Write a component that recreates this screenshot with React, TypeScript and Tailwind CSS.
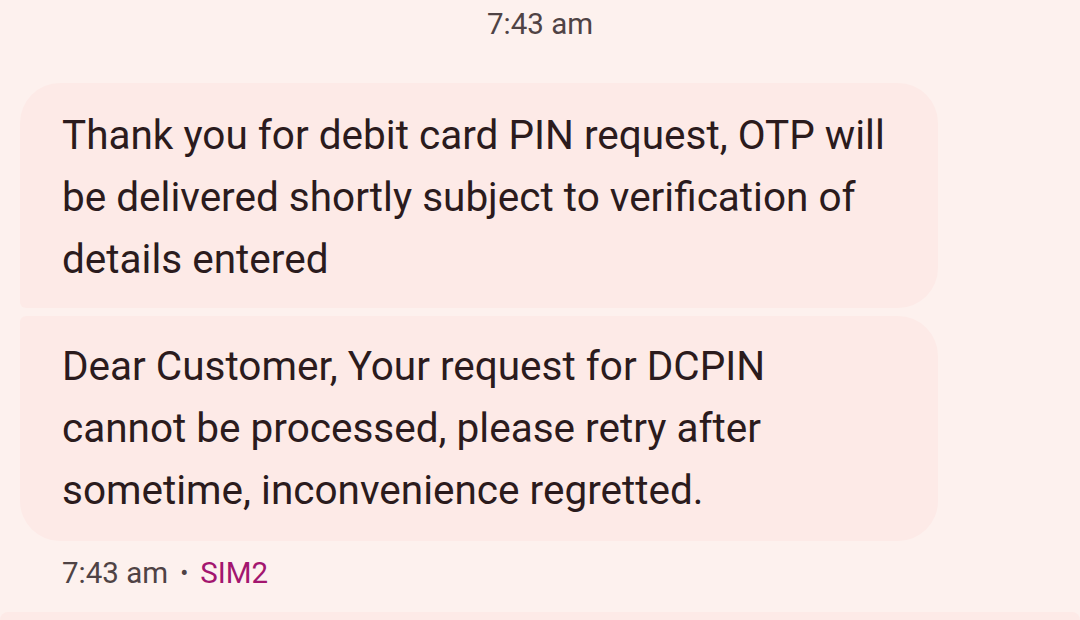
import React from "react";

export default function App() {
  return (
    <div
      className="w-[1080px] h-[620px] overflow-hidden bg-[#fdf1ee] flex flex-col"
      style={{ fontFamily: "Roboto, 'Noto Sans', sans-serif" }}
    >
      <div className="h-[48px] flex items-center justify-center text-[29.5px] text-[#4f4345]">
        7:43 am
      </div>
      <div className="pt-[35px] pl-[20px] flex flex-col gap-[8px]">
        <div className="w-[918px] h-[225px] bg-[#fdeae7] rounded-tl-[40px] rounded-tr-[40px] rounded-br-[40px] rounded-bl-[6px] pl-[42px] pr-[20px] pt-[21px] text-[40.5px] leading-[62px] text-[#2b1b1d]">
          Thank you for debit card PIN request, OTP will
          <br />
          be delivered shortly subject to verification of
          <br />
          details entered
        </div>
        <div className="w-[918px] h-[225px] bg-[#fdeae7] rounded-tl-[6px] rounded-tr-[40px] rounded-br-[40px] rounded-bl-[40px] pl-[42px] pr-[20px] pt-[19px] text-[40.5px] leading-[62px] text-[#2b1b1d]">
          Dear Customer, Your request for DCPIN
          <br />
          cannot be processed, please retry after
          <br />
          sometime, inconvenience regretted.
        </div>
      </div>
      <div className="pl-[62px] pt-[10px] text-[29.5px] text-[#4f4345] flex items-center gap-[12px]">
        <span>7:43 am</span>
        <span className="text-[24px]">•</span>
        <span className="text-[#a3166f]">SIM2</span>
      </div>
      <div className="mt-auto h-[8px] bg-[#fdeae7] rounded-t-[12px]" />
    </div>
  );
}
